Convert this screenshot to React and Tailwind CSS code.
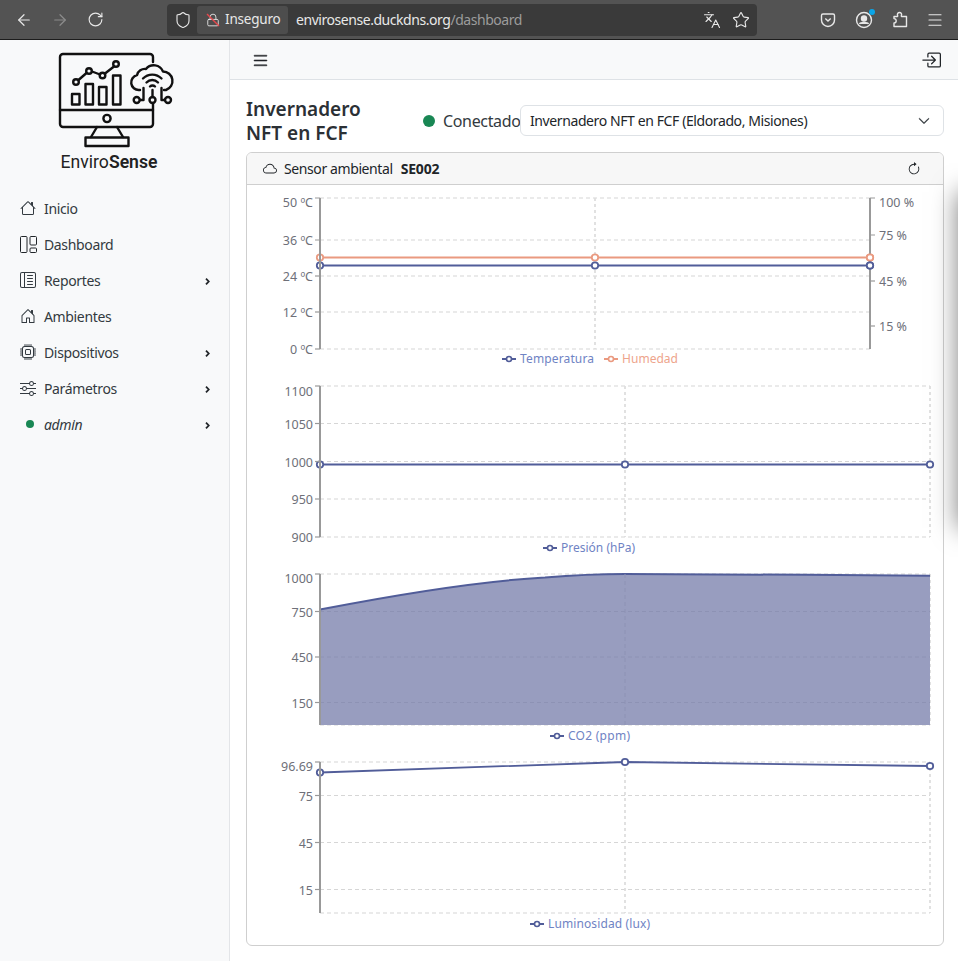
import React from "react";
import { ArrowLeft, ArrowRight, RotateCw, Shield, Lock, Languages, Star, Menu } from "lucide-react";
import { BsHouse, BsHouseDoor, BsLayoutTextSidebarReverse, BsCpu, BsSliders, BsCloud, BsArrowClockwise, BsBoxArrowInRight, BsList, BsChevronDown } from "react-icons/bs";

const BLUE = "#515d99";
const ORANGE = "#ea9a80";
const AXIS = "#999999";
const GRID = "#d6d6d6";
const LABEL = "#6e7079";

function Logo() {
  return (
    <svg width="122" height="98" viewBox="57 51 122 98" fill="none" stroke="#111" strokeWidth="2.4" strokeLinejoin="round" strokeLinecap="round">
      <path d="M152 62V57a3 3 0 0 0-3-3H62a3 3 0 0 0-3 3v67a3 3 0 0 0 3 3h87a3 3 0 0 0 3-3v-21" />
      <path d="M59 110h93" />
      <circle cx="106" cy="118.5" r="3.6" />
      <path d="M96 127l-6 10M116 127l6 10" />
      <rect x="84.5" y="137.5" width="43" height="8.5" />
      <rect x="71" y="94" width="7.5" height="10.5" />
      <rect x="84.5" y="84" width="7.5" height="20.5" />
      <rect x="98" y="87" width="7.5" height="17.5" />
      <rect x="112" y="75.5" width="7.5" height="29" />
      <path d="M77.5 80l8-7M91 71.5l8 3M104 73.5l9-7" />
      <circle cx="75" cy="82" r="2.8" />
      <circle cx="88" cy="71" r="2.8" />
      <circle cx="101.5" cy="75.5" r="2.8" />
      <circle cx="115" cy="64" r="2.8" />
      <path d="M139 90h-1a7.500 7.500 0 0 1-2-14.800 8 8 0 0 1 9-6.200 10 10 0 0 1 17 2.500 9.500 9.500 0 0 1 3 18.500h-2" fill="#f8f9fa" />
      <path d="M142 78.500a13 13 0 0 1 18.500 0M145.500 82.500a8 8 0 0 1 11.500 0" />
      <path d="M149 86.500a3.500 3.500 0 0 1 5 0" />
      <path d="M142.500 88v12h-3.500M160.500 88v12h3.500M151.500 90v7" />
      <circle cx="135.700" cy="100" r="3" />
      <circle cx="151.500" cy="100" r="3" />
      <circle cx="167" cy="100" r="3" />
    </svg>
  );
}

function DashIcon() {
  return (
    <svg width="17" height="17" viewBox="0 0 17 17" fill="none" stroke="#212529" strokeWidth="1">
      <rect x="0.500" y="0.500" width="6.500" height="16" rx="1" />
      <rect x="10" y="0.500" width="6.500" height="8.500" rx="1" />
      <rect x="10" y="12" width="6.500" height="4.500" rx="1" />
    </svg>
  );
}

function Caret() {
  return (
    <svg className="mt-[2px] mr-[1px]" width="5" height="7" viewBox="0 0 5 7" fill="none" stroke="#212529" strokeWidth="1.800">
      <path d="M1 .7l2.700 2.800-2.700 2.800" />
    </svg>
  );
}

function NavItem({ icon, label, caret, italic, dot }) {
  return (
    <div className="flex items-center h-9 pl-5 pr-[18px] text-[14px] tracking-[-0.35px] text-[#333a40]">
      <span className="w-6 flex items-center shrink-0">
        {dot ? <span className="ml-[6px] w-2 h-2 rounded-full bg-[#198754]" /> : icon}
      </span>
      <span className={italic ? "flex-1 italic" : "flex-1"}>{label}</span>
      {caret && <Caret />}
    </div>
  );
}

function Dot({ x, y, c = BLUE }) {
  return <circle cx={x} cy={y} r="3.200" fill="#fff" stroke={c} strokeWidth="1.800" />;
}

function Legend({ x, y, c = BLUE, text, tc = "#6f83c4", tw }) {
  return (
    <g>
      <line x1={x} x2={x + 14} y1={y} y2={y} stroke={c} strokeWidth="2" />
      <circle cx={x + 7} cy={y} r="2.500" fill="#fff" stroke={c} strokeWidth="1.600" />
      <text x={x + 18} y={y + 4} fontSize="12" fill={tc} textLength={tw} lengthAdjust="spacing">{text}</text>
    </g>
  );
}

function Chart({ y0, h, x0 = 320, x1 = 930, xm = 625, grid, ticks, bottom, children, top }) {
  return (
    <svg className="block absolute left-0" style={{ top: y0 - 185 }} width="696" height={h} viewBox={`247 ${y0} 696 ${h}`}>
      <g fill="none" stroke={GRID} strokeWidth="1.200" strokeDasharray="4 3">
        {grid.map((g) => (
          <line key={g} x1={x0} x2={x1} y1={g} y2={g} />
        ))}
        <line x1={xm} x2={xm} y1={top} y2={bottom} strokeWidth="1.800" strokeDasharray="3 3" stroke="#dedede" />
        <line x1={x1} x2={x1} y1={top} y2={bottom} strokeWidth="1.800" strokeDasharray="3 3" stroke="#dedede" />
      </g>
      {children}
      <line x1={x0} x2={x0} y1={top} y2={bottom} stroke={AXIS} strokeWidth="2" />
      {ticks.map(([ty, label, ly]) => (
        <g key={label}>
          <line x1={x0 - 5} x2={x0} y1={ty} y2={ty} stroke={AXIS} strokeWidth="1.200" />
          <text x={x0 - 7} y={(ly ?? ty) + 5} fontSize="12.500" textAnchor="end" fill={LABEL}>{label}</text>
        </g>
      ))}
    </svg>
  );
}

export default function App() {
  return (
    <div className="relative w-[958px] h-[961px] overflow-hidden bg-white flex flex-col font-['Noto_Sans',sans-serif] text-[#212529]">
      {/* Browser bar */}
      <div className="h-10 shrink-0 bg-[#535353] border-b border-[#1c1c1c] flex items-center text-[#e8e8e8]">
        <div className="w-[167px] flex items-center pl-[15px] gap-[18px]">
          <ArrowLeft size={18} strokeWidth={1.600} />
          <ArrowRight size={18} strokeWidth={1.600} className="text-[#8c8c8c]" />
          <RotateCw size={17} strokeWidth={1.600} />
        </div>
        <div className="w-[590px] h-8 rounded bg-[#3a3a3a] flex items-center relative">
          <Shield size={18} strokeWidth={1.500} className="ml-[7px]" />
          <div className="ml-[5px] w-[91px] h-7 rounded-[3px] bg-[#4d4d4d] flex items-center pl-[9px] gap-[5px] text-[13.500px]">
            <span className="relative flex">
              <Lock size={14} strokeWidth={1.500} />
              <svg className="absolute left-0 top-0" width="14" height="14" viewBox="0 0 14 14"><path d="M1 1l12 12" stroke="#e5484d" strokeWidth="1.400" /></svg>
            </span>
            <span className="tracking-[-0.2px]">Inseguro</span>
          </div>
          <span className="ml-2 text-[14px] tracking-[-0.45px]">envirosense.duckdns.org<span className="text-[#9c9c9c]">/dashboard</span></span>
          <div className="ml-auto flex items-center gap-[11px] pr-[7px]">
            <Languages size={18} strokeWidth={1.500} />
            <Star size={18} strokeWidth={1.500} />
          </div>
        </div>
        <div className="flex-1 flex items-center pl-[63px] gap-[19px]">
          <svg width="16" height="16" viewBox="0 0 16 16" fill="none" stroke="#e8e8e8" strokeWidth="1.400"><path d="M3 2h10a1.500 1.500 0 0 1 1.500 1.500V8a6.500 6.500 0 0 1-13 0V3.500A1.500 1.500 0 0 1 3 2z" /><path d="M5.300 6.500L8 9l2.700-2.500" /></svg>
          <span className="relative flex">
            <svg width="18" height="18" viewBox="0 0 18 18" fill="none" stroke="#e8e8e8" strokeWidth="1.400"><circle cx="9" cy="9" r="7.500" /><circle cx="9" cy="7.500" r="2.500" fill="#e8e8e8" /><path d="M4.500 13c1-2 8-2 9 0" fill="#e8e8e8" /></svg>
            <span className="absolute -top-[2px] -right-[2px] w-[6px] h-[6px] rounded-full bg-[#0aa5e8]" />
          </span>
          <svg width="16" height="17" viewBox="0 0 16 17" fill="none" stroke="#e8e8e8" strokeWidth="1.400" strokeLinejoin="round">
            <path d="M2 15.500V12a2.200 2.200 0 0 0 0-4.400V5.500h3.300c.5 0 .5-.5.3-1a2.100 2.100 0 1 1 3.800 0c-.2.5-.2 1 .3 1H14.500v10z" />
          </svg>
          <Menu size={18} strokeWidth={1.500} className="-ml-[1px]" />
        </div>
      </div>

      <div className="flex-1 flex min-h-0">
        {/* Sidebar */}
        <aside className="w-[230px] shrink-0 bg-[#f8f9fa] border-r border-[#e3e5e8] flex flex-col">
          <div className="pl-[58px] pt-[11px] h-[150px]">
            <Logo />
            <div className="w-[120px] text-center -ml-[9px] mt-[1px] text-[17.600px] leading-6 text-[#222] font-['Roboto',sans-serif]">
              Enviro<span className="font-semibold">Sense</span>
            </div>
          </div>
          <NavItem label="Inicio" icon={<BsHouse size={16} />} />
          <NavItem label="Dashboard" icon={<DashIcon />} />
          <NavItem label="Reportes" caret icon={<BsLayoutTextSidebarReverse size={16} />} />
          <NavItem label="Ambientes" icon={<BsHouseDoor size={16} />} />
          <NavItem label="Dispositivos" caret icon={<BsCpu size={16} />} />
          <NavItem label="Parámetros" caret icon={<BsSliders size={16} />} />
          <NavItem label="admin" caret italic dot />
        </aside>

        {/* Main */}
        <main className="flex-1 min-w-0 flex flex-col">
          <div className="h-10 shrink-0 bg-[#f8f9fa] border-b border-[#dee2e6] flex items-center justify-between pl-[21px] pr-[17px] pt-[1px]">
            <BsList size={19} stroke="#212529" strokeWidth={0.4} />
            <BsBoxArrowInRight size={20} />
          </div>
          <div className="pl-4 pr-[14px]">
            <div className="flex items-center h-[72px] pt-[9px]">
              <h1 className="w-[170px] text-[19px] leading-6 font-semibold text-[#2b3035]">Invernadero<br />NFT en FCF</h1>
              <span className="ml-[7px] w-[12px] h-[12px] rounded-full bg-[#198754]" />
              <span className="ml-2 w-[77px] text-[16px] tracking-[-0.35px] whitespace-nowrap text-[#333a40]">Conectado</span>
              <div className="w-[424px] h-[31px] border border-[#dee2e6] rounded-md flex items-center justify-between pl-[9px] pr-[13px] text-[14px] tracking-[-0.4px]">
                <span>Invernadero NFT en FCF (Eldorado, Misiones)</span>
                <BsChevronDown size={12} stroke="#343a40" strokeWidth={0.8} />
              </div>
            </div>
            <div className="border border-[#cfcfcf] rounded-md h-[794px] overflow-hidden">
              <div className="h-[32px] bg-[#f7f7f7] border-b border-[#cfcfcf] flex items-center pl-4 pr-[22px] text-[14px] tracking-[-0.4px]">
                <BsCloud size={14} />
                <span className="ml-[7px]">Sensor ambiental</span>
                <span className="ml-2 font-bold text-[14px] tracking-[-0.2px]">SE002</span>
                <BsArrowClockwise size={14} className="ml-auto" />
              </div>
              <div className="relative h-[760px]">
                <Chart y0={187} h={183} x1={870} xm={595} top={198} bottom={349} grid={[198, 240, 276, 312, 349]}
                  ticks={[[198, "50 ºC", 202], [240, "36 ºC"], [276, "24 ºC"], [312, "12 ºC"], [349, "0 ºC"]]}>
                  <line x1="320" x2="870" y1="257.500" y2="257.500" stroke={ORANGE} strokeWidth="1.800" />
                  <line x1="320" x2="870" y1="265.500" y2="265.500" stroke={BLUE} strokeWidth="1.800" />
                  {[320, 595, 870].map((x) => <Dot key={x} x={x} y={257.5} c={ORANGE} />)}
                  <line x1="870" x2="870" y1="198" y2="349" stroke={AXIS} strokeWidth="2" />
                  {[320, 595, 870].map((x) => <Dot key={x} x={x} y={265.5} />)}
                  <Dot x={870} y={257.5} c={ORANGE} />
                  <Dot x={870} y={265.5} />
                  {[[198, "100 %", 202], [235, "75 %"], [281, "45 %"], [326, "15 %"]].map(([ty, l, ly]) => (
                    <g key={l}>
                      <line x1="870" x2="875" y1={ty} y2={ty} stroke={AXIS} strokeWidth="1.200" />
                      <text x="879" y={(ly ?? ty) + 5} fontSize="12.500" fill={LABEL}>{l}</text>
                    </g>
                  ))}
                  <Legend x={502} y={359} text="Temperatura" tw={74} />
                  <Legend x={604} y={359} text="Humedad" c={ORANGE} tc="#eea48c" tw={56} />
                </Chart>
                <Chart y0={378} h={180} top={386} bottom={537} grid={[386, 423.5, 461.5, 499, 537]}
                  ticks={[[386, "1100", 390.5], [423.5, "1050"], [461.5, "1000"], [499, "950"], [537, "900"]]}>
                  <line x1="320" x2="930" y1="464.500" y2="464.500" stroke={BLUE} strokeWidth="1.800" />
                  {[320, 625, 930].map((x) => <Dot key={x} x={x} y={464.5} />)}
                  <Legend x={543} y={548} text="Presión (hPa)" tw={74} />
                </Chart>
                <Chart y0={566} h={180} top={574} bottom={725} grid={[574, 611.5, 657, 702.5, 725]}
                  ticks={[[574, "1000", 578], [611.5, "750"], [657, "450"], [702.5, "150"]]}>
                  <path d="M320 609.500C400 594 480 581 545 577.500C575 575 600 574 625 574C720 574 830 575 930 575.800V725H320Z" fill="#989dbf" />
                  <path d="M320 609.500C400 594 480 581 545 577.500C575 575 600 574 625 574C720 574 830 575 930 575.800" fill="none" stroke={BLUE} strokeWidth="2" />
                  <g stroke="#8d92b4" strokeWidth="1" strokeDasharray="4 3">
                    {[611.5, 657, 702.5].map((g) => <line key={g} x1="320" x2="930" y1={g} y2={g} />)}
                    <line x1="625" x2="625" y1="574" y2="725" />
                  </g>
                  <Legend x={550} y={736} text="CO2 (ppm)" tw={62} />
                </Chart>
                <Chart y0={755} h={180} top={762} bottom={913} grid={[762, 795.5, 842.5, 889.5, 913]}
                  ticks={[[762, "96.69", 766], [795.5, "75"], [842.5, "45"], [889.5, "15"]]}>
                  <path d="M320 772.500L625 762L930 766" fill="none" stroke={BLUE} strokeWidth="1.800" />
                  <Dot x={320} y={772.5} />
                  <Dot x={625} y={762} />
                  <Dot x={930} y={766} />
                  <Legend x={530} y={924} text="Luminosidad (lux)" tw={102} />
                </Chart>
              </div>
            </div>
          </div>
        </main>
      </div>
      <div className="absolute left-[958px] top-[192px] w-[200px] h-[336px] bg-white shadow-[0_0_24px_rgba(0,0,0,0.5)]" />
    </div>
  );
}
